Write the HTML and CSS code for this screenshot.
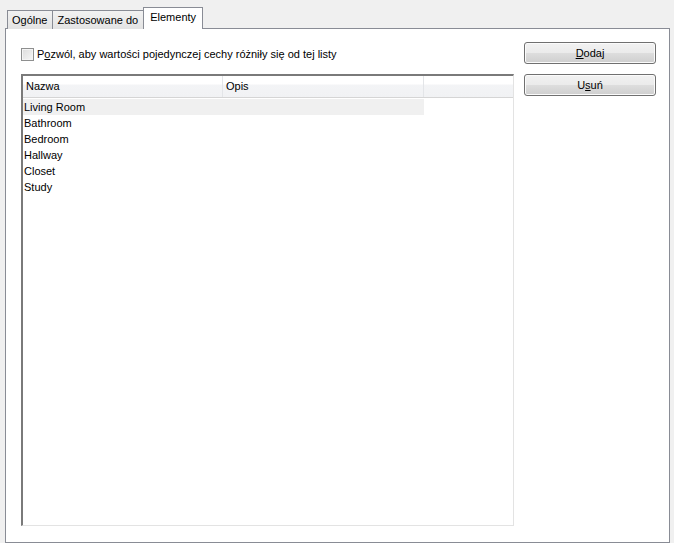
FILE: index.html
```html
<!DOCTYPE html>
<html lang="pl">
<head>
  <meta charset="UTF-8" />
  <title>Elementy</title>
  <link rel="stylesheet" href="styles.css">
</head>
<body>

  <!-- Tabs -->
  <div class="tabs">
    <div class="tab">Ogólne</div>
    <div class="tab">Zastosowane do</div>
    <div class="tab active">Elementy</div>
  </div>

  <!-- Tab page -->
  <div class="panel">
    <div class="main">
      <label class="check-row">
        <span class="checkbox"></span>
        <span>P<u>o</u>zwól, aby wartości pojedynczej cechy różniły się od tej listy</span>
      </label>

      <div class="list">
        <div class="list-head">
          <div class="col col-name">Nazwa</div>
          <div class="col col-desc">Opis</div>
          <div class="col col-rest"></div>
        </div>
        <div class="list-body">
          <div class="row selected">Living Room</div>
          <div class="row">Bathroom</div>
          <div class="row">Bedroom</div>
          <div class="row">Hallway</div>
          <div class="row">Closet</div>
          <div class="row">Study</div>
        </div>
      </div>
    </div>

    <div class="side">
      <button class="btn"><u>D</u>odaj</button>
      <button class="btn">U<u>s</u>uń</button>
    </div>
  </div>

</body>
</html>
```

FILE: styles.css
```css
* {
  margin: 0;
  padding: 0;
  box-sizing: border-box;
}

body, html {
  height: 100%;
  font-family: "Liberation Sans", Arial, sans-serif;
  font-size: 11px;
  color: #000;
  background: #f0f0f0;
  overflow: hidden;
}

body {
  padding: 6px 4px 0 5px;
  display: flex;
  flex-direction: column;
}

/* tabs */
.tabs {
  display: flex;
  align-items: flex-end;
  height: 22px;
  padding-left: 2px;
  position: relative;
  z-index: 2;
}

.tab {
  height: 19px;
  line-height: 18px;
  padding: 0 5px 0 4px;
  border: 1px solid #898c95;
  border-bottom: none;
  border-right: none;
  background: linear-gradient(#f2f2f2, #e3e3e3);
  margin-bottom: -1px;
}

.tab.active {
  height: 22px;
  line-height: 19px;
  padding: 0 6px 0 6px;
  background: #fff;
  border-right: 1px solid #898c95;
}

/* page */
.panel {
  flex: 1;
  background: #fff;
  border: 1px solid #898c95;
  display: flex;
  padding: 13px 13px 16px 15px;
  gap: 10px;
}

.main {
  width: 493px;
  display: flex;
  flex-direction: column;
}

.check-row {
  display: flex;
  align-items: center;
  gap: 3px;
  height: 14px;
  margin-top: 5px;
  margin-bottom: 13px;
}

.checkbox {
  width: 13px;
  height: 13px;
  border: 1px solid #8e8f8f;
  background: linear-gradient(135deg, #dcdcdc, #f6f6f6);
  box-shadow: inset 0 0 0 1px #f4f4f4;
}

.list {
  flex: 1;
  border: 1px solid #e3e3e3;
  border-top: 2px solid #7a7a7a;
  border-left: 2px solid #7a7a7a;
  display: flex;
  flex-direction: column;
}

.list-head {
  display: flex;
  height: 22px;
  background: linear-gradient(#ffffff 0%, #ffffff 40%, #f3f4f6 41%, #f1f2f4 100%);
  border-bottom: 1px solid #d5d5d5;
}

.col {
  line-height: 21px;
  padding-left: 3px;
  border-right: 1px solid #e3e5e8;
}

.col-name {
  width: 200px;
}

.col-desc {
  width: 201px;
}

.col-rest {
  flex: 1;
  border-right: none;
}

.list-body {
  padding-top: 1px;
}

.row {
  width: 401px;
  height: 16px;
  line-height: 16px;
  padding-left: 1px;
}

.row.selected {
  background: #f0f0f0;
}

/* buttons */
.side {
  display: flex;
  flex-direction: column;
  gap: 10px;
}

.btn {
  width: 132px;
  height: 22px;
  font-family: inherit;
  font-size: 11px;
  color: #000;
  border: 1px solid #707070;
  border-radius: 3px;
  background: linear-gradient(#f2f2f2 0%, #ebebeb 48%, #dddddd 52%, #cfcfcf 100%);
  box-shadow: inset 0 0 0 1px #fbfbfb;
}
```
